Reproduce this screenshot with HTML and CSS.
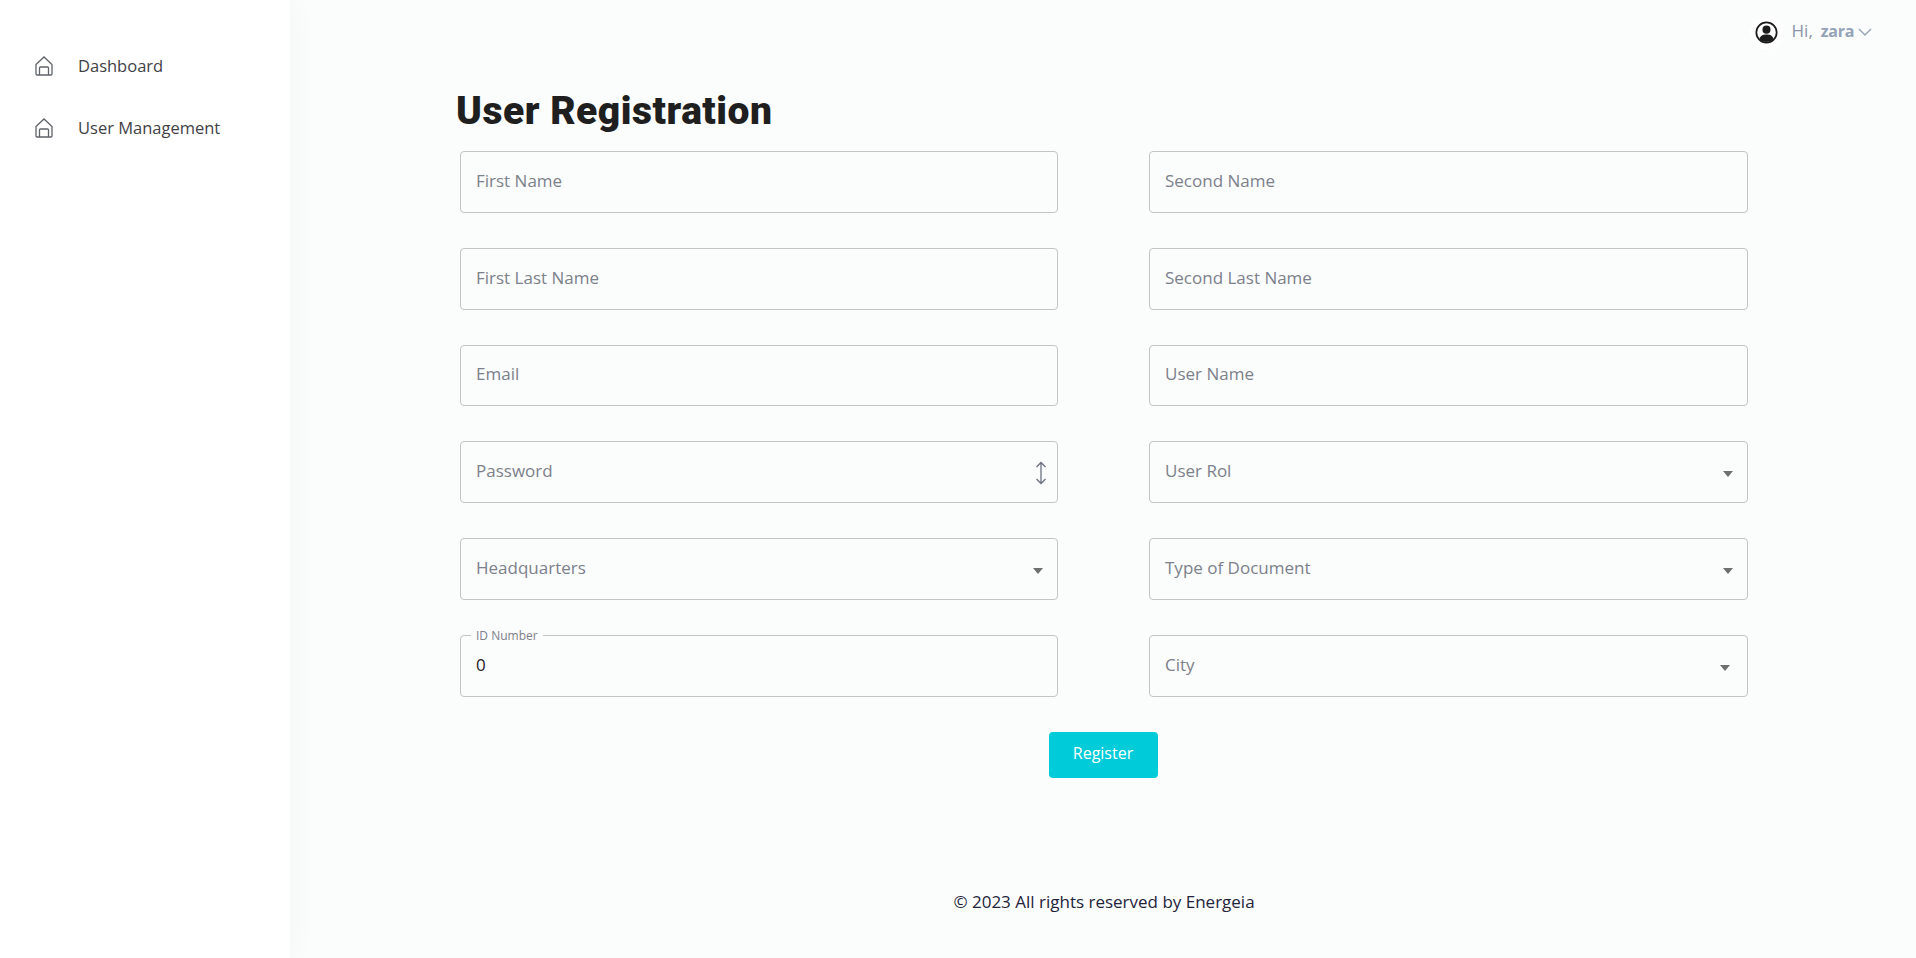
FILE: index.html
```html
<!DOCTYPE html>
<html lang="en">
<head>
    <meta charset="UTF-8">
    <title>User Registration</title>
    <link rel="stylesheet" href="styles.css">
</head>
<body>
    <div class="page-container">
        <!-- Sidebar -->
        <aside class="sidebar">
            <a class="nav-item" href="#">
                <svg class="nav-icon" viewBox="0 0 18 20" fill="none" stroke="currentColor" stroke-width="1.300"><path d="M1 8.500 9 1l8 7.500V18a1 1 0 0 1-1 1H2a1 1 0 0 1-1-1z"/><path d="M4.500 19v-7a1 1 0 0 1 1-1h7a1 1 0 0 1 1 1v7"/></svg>
                <span>Dashboard</span>
            </a>
            <a class="nav-item" href="#">
                <svg class="nav-icon" viewBox="0 0 18 20" fill="none" stroke="currentColor" stroke-width="1.300"><path d="M1 8.500 9 1l8 7.500V18a1 1 0 0 1-1 1H2a1 1 0 0 1-1-1z"/><path d="M4.500 19v-7a1 1 0 0 1 1-1h7a1 1 0 0 1 1 1v7"/></svg>
                <span>User Management</span>
            </a>
        </aside>

        <!-- Main Content -->
        <div class="main-content">
            <header class="topbar">
                <span class="avatar">
                    <svg viewBox="0 0 24 24" width="23" height="23" fill="none"><circle cx="12" cy="12" r="10.600" stroke="#1c1c1c" stroke-width="1.800"/><circle cx="12" cy="9" r="4.200" fill="#1c1c1c"/><path d="M4.600 19c.8-3.600 3.600-5 7.400-5s6.600 1.400 7.400 5a10.600 10.600 0 0 1-14.800 0z" fill="#1c1c1c"/></svg>
                </span>
                <span class="greeting">Hi,</span>
                <span class="username">zara</span>
                <svg class="chevron" viewBox="0 0 14 8" fill="none" stroke="#94a3b8" stroke-width="1.400"><path d="M1 1l6 6 6-6"/></svg>
            </header>

            <main class="register">
                <h1 class="title">User Registration</h1>
                <form class="form-grid">
                    <div class="field"><span class="placeholder">First Name</span></div>
                    <div class="field"><span class="placeholder">Second Name</span></div>
                    <div class="field"><span class="placeholder">First Last Name</span></div>
                    <div class="field"><span class="placeholder">Second Last Name</span></div>
                    <div class="field"><span class="placeholder">Email</span></div>
                    <div class="field"><span class="placeholder">User Name</span></div>
                    <div class="field">
                        <span class="placeholder">Password</span>
                        <svg class="stepper" viewBox="0 0 12 24" fill="none" stroke="#6b7280" stroke-width="1.300"><path d="M6 1.500v21M1.500 6 6 1.500 10.500 6M1.500 18 6 22.500l4.500-4.500"/></svg>
                    </div>
                    <div class="field select"><span class="placeholder">User Rol</span><i class="caret"></i></div>
                    <div class="field select"><span class="placeholder">Headquarters</span><i class="caret"></i></div>
                    <div class="field select"><span class="placeholder">Type of Document</span><i class="caret"></i></div>
                    <div class="field filled"><span class="float-label">ID Number</span><span class="value">0</span></div>
                    <div class="field select city"><span class="placeholder">City</span><i class="caret"></i></div>
                </form>
                <button class="submit" type="button">Register</button>
            </main>

            <footer class="footer">© 2023 All rights reserved by Energeia</footer>
        </div>
    </div>
</body>
</html>
```

FILE: styles.css
```css
* {
    margin: 0;
    padding: 0;
    box-sizing: border-box;
}

html,
body {
    height: 100%;
    overflow: hidden;
}

body {
    font-family: 'Open Sans', 'Noto Sans', sans-serif;
    background-color: #fbfcfc;
    color: #1f2024;
}

.page-container {
    display: flex;
    height: 958px;
}

.sidebar {
    width: 290px;
    flex-shrink: 0;
    background: white;
    padding-top: 40px;
    box-shadow: 0 0 30px rgba(0, 0, 0, 0.04);
    position: relative;
}

.nav-item {
    display: flex;
    align-items: center;
    gap: 25px;
    height: 50px;
    margin-bottom: 12px;
    padding-left: 35px;
    color: #3f3f46;
    text-decoration: none;
    font-size: 16.500px;
}

.nav-icon {
    width: 18px;
    height: 20px;
    color: #5f6368;
    margin-top: 2px;
}

.main-content {
    flex: 1;
    display: flex;
    flex-direction: column;
    min-width: 0;
}

.topbar {
    display: flex;
    align-items: center;
    justify-content: flex-end;
    height: 64px;
    padding-right: 44px;
    color: #8b95a7;
    font-size: 17px;
}

.avatar {
    width: 33px;
    height: 33px;
    border-radius: 50%;
    background: white;
    display: flex;
    align-items: center;
    justify-content: center;
    margin-right: 9px;
}

.greeting {
    margin-top: -3px;
}

.username {
    font-weight: 700;
    font-size: 16px;
    letter-spacing: -0.3px;
    color: #94a3b8;
    margin-top: -3px;
    margin-left: 8px;
    margin-right: 4px;
}

.chevron {
    width: 14px;
    height: 8px;
}

.register {
    padding: 24px 168px 0 170px;
    display: flex;
    flex-direction: column;
}

.title {
    font-family: Roboto, 'Open Sans', sans-serif;
    font-size: 39px;
    line-height: 46px;
    font-weight: 900;
    letter-spacing: 0.5px;
    color: #1f1f1f;
    margin-left: -4px;
    margin-bottom: 17px;
}

.form-grid {
    display: grid;
    grid-template-columns: 598px 599px;
    column-gap: 91px;
    row-gap: 35px;
}

.field {
    position: relative;
    height: 61.800px;
    display: flex;
    align-items: center;
    padding: 0 15px;
    border: 1px solid #c2c4c6;
    border-radius: 4px;
    font-size: 17px;
}

.placeholder {
    color: #7c818b;
    margin-top: -3px;
}

.value {
    color: #1f2024;
    margin-top: -2px;
}

.float-label {
    position: absolute;
    top: -8px;
    left: 10px;
    padding: 0 5px;
    background: #fbfcfc;
    color: #7c818b;
    font-size: 12px;
    line-height: 16px;
}

.caret {
    position: absolute;
    right: 14px;
    top: 29px;
    border-left: 5.500px solid transparent;
    border-right: 5.500px solid transparent;
    border-top: 6px solid #6f6f6f;
}

.city .caret {
    right: 17px;
}

.stepper {
    position: absolute;
    right: 10px;
    top: 19px;
    width: 12px;
    height: 24px;
}

.submit {
    align-self: center;
    width: 109px;
    height: 46px;
    margin-top: 35px;
    margin-right: 2px;
    padding-bottom: 3px;
    background-color: #00cbd8;
    color: white;
    border: none;
    border-radius: 4px;
    font-family: inherit;
    font-size: 16px;
}

.footer {
    margin-top: auto;
    padding-bottom: 45px;
    padding-left: 2px;
    text-align: center;
    font-size: 17px;
    line-height: 22px;
    color: #23243a;
}
```
